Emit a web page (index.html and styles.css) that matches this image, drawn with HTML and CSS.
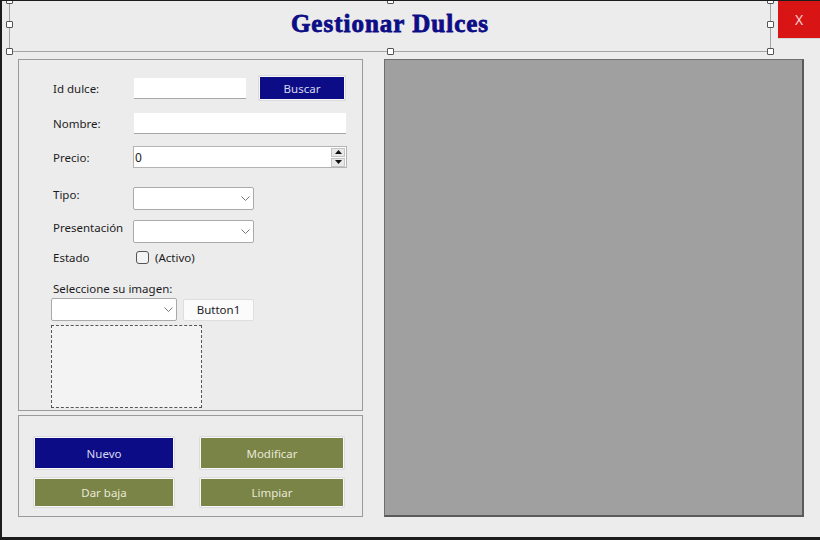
FILE: index.html
```html
<!DOCTYPE html>
<html lang="es">
<head>
<meta charset="utf-8">
<title>Gestionar Dulces</title>
<link rel="stylesheet" href="styles.css">
</head>
<body>
<div class="window">
  <header class="top">
    <div class="title-box">
      <h1 class="title">Gestionar Dulces</h1>
      <span class="handle h-tl"></span>
      <span class="handle h-tc"></span>
      <span class="handle h-tr"></span>
      <span class="handle h-ml"></span>
      <span class="handle h-mr"></span>
      <span class="handle h-bl"></span>
      <span class="handle h-bc"></span>
      <span class="handle h-br"></span>
    </div>
    <div class="close">X</div>
  </header>
  <main class="main">
    <div class="left">
      <section class="group form">
        <div class="row r1">
          <span class="label">Id dulce:</span>
          <div class="textbox tb-id"></div>
          <div class="btn btn-navy btn-buscar">Buscar</div>
        </div>
        <div class="row r2">
          <span class="label">Nombre:</span>
          <div class="textbox tb-nombre"></div>
        </div>
        <div class="row r3">
          <span class="label">Precio:</span>
          <div class="numeric">
            <span class="num-val">0</span>
            <div class="spin">
              <span class="spin-btn"><svg width="7" height="4" viewBox="0 0 7 4"><polygon points="0,4 7,4 3.5,0" fill="#111"/></svg></span>
              <span class="spin-btn"><svg width="7" height="4" viewBox="0 0 7 4"><polygon points="0,0 7,0 3.5,4" fill="#111"/></svg></span>
            </div>
          </div>
        </div>
        <div class="row r4">
          <span class="label">Tipo:</span>
          <div class="combo combo-sm"><svg class="chev" width="9" height="5" viewBox="0 0 9 5"><polyline points="0.5,0.5 4.5,4.5 8.5,0.5" fill="none" stroke="#777" stroke-width="1"/></svg></div>
        </div>
        <div class="row r5">
          <span class="label">Presentación</span>
          <div class="combo combo-sm"><svg class="chev" width="9" height="5" viewBox="0 0 9 5"><polyline points="0.5,0.5 4.5,4.5 8.5,0.5" fill="none" stroke="#777" stroke-width="1"/></svg></div>
        </div>
        <div class="row r6">
          <span class="label">Estado</span>
          <span class="check"></span>
          <span class="check-text">(Activo)</span>
        </div>
        <div class="row r7">
          <span class="caption">Seleccione su imagen:</span>
        </div>
        <div class="row r8">
          <div class="combo combo-img"><svg class="chev" width="9" height="5" viewBox="0 0 9 5"><polyline points="0.5,0.5 4.5,4.5 8.5,0.5" fill="none" stroke="#777" stroke-width="1"/></svg></div>
          <div class="btn-plain">Button1</div>
        </div>
        <div class="picture"></div>
      </section>
      <section class="group actions">
        <div class="btn btn-navy">Nuevo</div>
        <div class="btn btn-olive">Modificar</div>
        <div class="btn btn-olive">Dar baja</div>
        <div class="btn btn-olive">Limpiar</div>
      </section>
    </div>
    <div class="canvas"></div>
  </main>
</div>
</body>
</html>
```

FILE: styles.css
```css
* { box-sizing: border-box; }

html, body {
  margin: 0;
  padding: 0;
  background: #ececec;
}

body {
  font-family: "Noto Sans", "Open Sans", sans-serif;
  font-size: 11.5px;
  color: #1c1c1c;
}

.window {
  width: 820px;
  height: 540px;
  background: #ececec;
  border-left: 2px solid #1c1c1c;
  border-top: 1px solid #1c1c1c;
  border-bottom: 3px solid #1c1c1c;
  overflow: hidden;
}

/* header */
.top {
  display: flex;
  align-items: flex-start;
  height: 51px;
}

.title-box {
  position: relative;
  margin-left: 7px;
  width: 762px;
  height: 51px;
  border-left: 1px solid #a4a4a4;
  border-right: 1px solid #a4a4a4;
  border-bottom: 1px solid #a4a4a4;
  display: flex;
  align-items: center;
  justify-content: center;
}

.title {
  margin: 0 0 5px 0;
  font-family: "Liberation Serif", "Times New Roman", serif;
  font-weight: bold;
  font-size: 25px;
  letter-spacing: 1px;
  color: #0d0d86;
  -webkit-text-stroke: 0.8px #0d0d86;
  line-height: 1;
}

.handle {
  position: absolute;
  width: 7px;
  height: 7px;
  background: #fff;
  border: 1px solid #555;
  border-radius: 1px;
}
.h-tl { left: -4px; top: -4px; }
.h-tc { left: 377px; top: -4px; }
.h-tr { right: -4px; top: -4px; }
.h-ml { left: -4px; top: 20px; }
.h-mr { right: -4px; top: 20px; }
.h-bl { left: -4px; bottom: -4px; }
.h-bc { left: 377px; bottom: -4px; }
.h-br { right: -4px; bottom: -4px; }

.close {
  margin-left: 7px;
  margin-top: -1px;
  width: 42px;
  height: 38px;
  background: #d81414;
  color: #f6d0d0;
  font-size: 14px;
  display: flex;
  align-items: center;
  justify-content: center;
  box-shadow: 0 1px 0 #d4d4d4;
}

/* main */
.main {
  display: flex;
  margin-top: 7px;
  padding-left: 16px;
  gap: 21px;
}

.left {
  width: 345px;
  display: flex;
  flex-direction: column;
  gap: 4px;
}

.group {
  border: 1px solid #9a9a9a;
}

.form {
  height: 352px;
  padding: 16px 0 0 34px;
}

.row {
  display: flex;
  align-items: center;
}

.label {
  width: 80px;
  flex: none;
}

.r1 { height: 24px; }
.r2 { height: 22px; margin-top: 12px; }
.r3 { height: 22px; margin-top: 12px; }
.r4 { height: 23px; margin-top: 19px; }
.r5 { height: 23px; margin-top: 10px; }
.r6 { height: 18px; margin-top: 5px; }
.r7 { height: 16px; margin-top: 14px; }
.r8 { height: 23px; margin-top: 2px; margin-left: -2px; }

.r4 .label, .r5 .label { align-self: flex-start; }

.textbox {
  background: #fff;
  height: 21px;
  border-bottom: 1px solid #a8a8a8;
}
.tb-id { width: 112px; margin-left: 1px; }
.tb-nombre { width: 212px; margin-left: 1px; }

.btn {
  display: flex;
  align-items: center;
  justify-content: center;
  border: 1px solid #f8f8f8;
  box-shadow: 0 0 0 1px #dcdcdc;
  border-radius: 1px;
}
.btn-navy { background: #0c0d86; color: #d6d8ee; }
.btn-olive { background: #7a8447; color: #e8e8d6; }

.btn-buscar {
  width: 86px;
  height: 24px;
  margin-left: 13px;
}

.numeric {
  width: 214px;
  height: 22px;
  background: #fff;
  border: 1px solid #b4b4b4;
  display: flex;
  align-items: center;
  justify-content: space-between;
  padding-left: 1px;
}
.num-val { font-size: 12px; }
.spin {
  display: flex;
  flex-direction: column;
  gap: 1px;
  margin-right: 1px;
}
.spin-btn {
  width: 14px;
  height: 9px;
  background: #e8e8e8;
  border: 1px solid #c4c4c4;
  display: flex;
  align-items: center;
  justify-content: center;
}

.combo {
  height: 23px;
  background: #fff;
  border: 1px solid #aaa;
  border-radius: 2px;
  display: flex;
  align-items: center;
  justify-content: flex-end;
  padding-right: 3px;
}
.combo-sm { width: 121px; }
.combo-img { width: 126px; }

.check {
  width: 13px;
  height: 13px;
  border: 1px solid #555;
  border-radius: 3px;
  background: #f4f4f4;
  margin-left: 3px;
}
.check-text { margin-left: 6px; }

.btn-plain {
  width: 71px;
  height: 22px;
  margin-left: 6px;
  background: #fbfbfb;
  border: 1px solid #dedede;
  border-radius: 2px;
  display: flex;
  align-items: center;
  justify-content: center;
}

.picture {
  margin-top: 4px;
  margin-left: -2px;
  width: 151px;
  height: 83px;
  background: #f3f3f3;
  border: 1px dashed #555;
}

.actions {
  height: 102px;
  padding: 21px 0 0 15px;
  display: grid;
  grid-template-columns: 140px 144px;
  grid-template-rows: 32px 29px;
  column-gap: 26px;
  row-gap: 9px;
  align-content: start;
}

.canvas {
  width: 420px;
  height: 458px;
  background: #a0a0a0;
  border-top: 1px solid #6e6e6e;
  border-left: 1px solid #6e6e6e;
  border-right: 2px solid #5a5a5a;
  border-bottom: 2px solid #5a5a5a;
}
```
